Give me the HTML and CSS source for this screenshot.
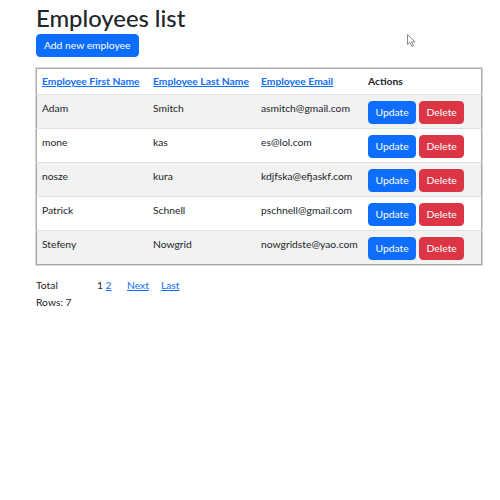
FILE: index.html
```html
<!DOCTYPE html>
<html>
<head>
<meta charset="utf-8">
<link rel="stylesheet" href="styles.css">
</head>
<body>
<div class="container">
  <h1 class="title">Employees list</h1>
  <button class="btn btn-primary add">Add new employee</button>
  <table class="emp-table">
    <thead>
      <tr>
        <th class="c1"><a href="#">Employee First Name</a></th>
        <th class="c2"><a href="#">Employee Last Name</a></th>
        <th class="c3"><a href="#">Employee Email</a></th>
        <th class="c4">Actions</th>
      </tr>
    </thead>
    <tbody>
      <tr><td>Adam</td><td>Smitch</td><td>asmitch@gmail.com</td><td class="actions"><div class="btns"><button class="btn btn-primary">Update</button><button class="btn btn-danger">Delete</button></div></td></tr>
      <tr><td>mone</td><td>kas</td><td>es@lol.com</td><td class="actions"><div class="btns"><button class="btn btn-primary">Update</button><button class="btn btn-danger">Delete</button></div></td></tr>
      <tr><td>nosze</td><td>kura</td><td>kdjfska@efjaskf.com</td><td class="actions"><div class="btns"><button class="btn btn-primary">Update</button><button class="btn btn-danger">Delete</button></div></td></tr>
      <tr><td>Patrick</td><td>Schnell</td><td>pschnell@gmail.com</td><td class="actions"><div class="btns"><button class="btn btn-primary">Update</button><button class="btn btn-danger">Delete</button></div></td></tr>
      <tr><td>Stefeny</td><td>Nowgrid</td><td>nowgridste@yao.com</td><td class="actions"><div class="btns"><button class="btn btn-primary">Update</button><button class="btn btn-danger">Delete</button></div></td></tr>
    </tbody>
  </table>
  <div class="pager">
    <div class="pager-row">
      <span class="total">Total</span>
      <span class="pages">1 <a href="#">2</a></span>
      <a href="#" class="nav">Next</a>
      <a href="#" class="nav">Last</a>
    </div>
    <div class="rows">Rows: 7</div>
  </div>
</div>
<svg class="cursor" width="10" height="14" viewBox="0 0 10 14"><path d="M0.5 0.5 L0.5 10.5 L3 8.2 L5 12.5 L6.6 11.8 L4.7 7.7 L8 7.7 Z" fill="#fff" stroke="#8a8a8a" stroke-width="1"/></svg>
</body>
</html>
```
FILE: styles.css
```css
html, body {
  margin: 0;
  padding: 0;
  background: #fff;
}
body {
  font-family: Lato, "Open Sans", sans-serif;
  font-size: 10.3px;
  color: #212529;
  position: relative;
  width: 500px;
  height: 500px;
}
.container {
  padding: 4px 30px 0 36px;
}
.title {
  font-size: 23.8px;
  font-weight: 500;
  margin: 0 0 2px 0;
  line-height: 28px;
}
.btn {
  font-family: inherit;
  font-size: 10.3px;
  line-height: 15px;
  height: 23px;
  border: 1px solid transparent;
  border-radius: 4px;
  padding: 3px 8px;
  color: #fff;
  cursor: pointer;
}
.btn-primary { background: #0d6efd; border-color: #0d6efd; }
.btn-danger { background: #dc3545; border-color: #dc3545; }
.add {
  padding: 3px 7px;
  margin: 0;
  display: block;
}
.emp-table {
  margin-top: 11px;
  width: 434px;
  table-layout: fixed;
  border-collapse: collapse;
  border: 1px solid #a8a8a8;
  box-shadow: 0 0 0 1px #d8d8d8;
}
.emp-table th, .emp-table td {
  text-align: left;
  vertical-align: top;
  padding: 6px 4px 4px 5px;
  border-bottom: 1px solid #dee2e6;
  line-height: 15px;
  white-space: nowrap;
}
.emp-table th {
  font-weight: 700;
  padding-top: 5px;
  padding-bottom: 5px;
}
.emp-table th a { color: #0d6efd; text-decoration: underline; }
.c1 { width: 102px; }
.c2 { width: 99px; }
.c3 { width: 98px; }
.c4 { width: 109px; }
.emp-table tbody tr:nth-child(odd) td { background: #f2f2f2; }
.emp-table tbody tr:last-child td { border-bottom: none; }
.btns {
  display: flex;
  gap: 3px;
}
.btns .btn { padding: 3px 6.5px; }
.pager {
  margin-top: 12px;
}
.pager-row {
  display: flex;
  align-items: baseline;
  line-height: 17px;
}
.total { width: 61px; }
.pages { width: 30px; }
.pager a { color: #0d6efd; }
.nav { margin-right: 12px; }
.rows { line-height: 17px; }
.cursor {
  position: absolute;
  left: 407px;
  top: 34px;
}
```
